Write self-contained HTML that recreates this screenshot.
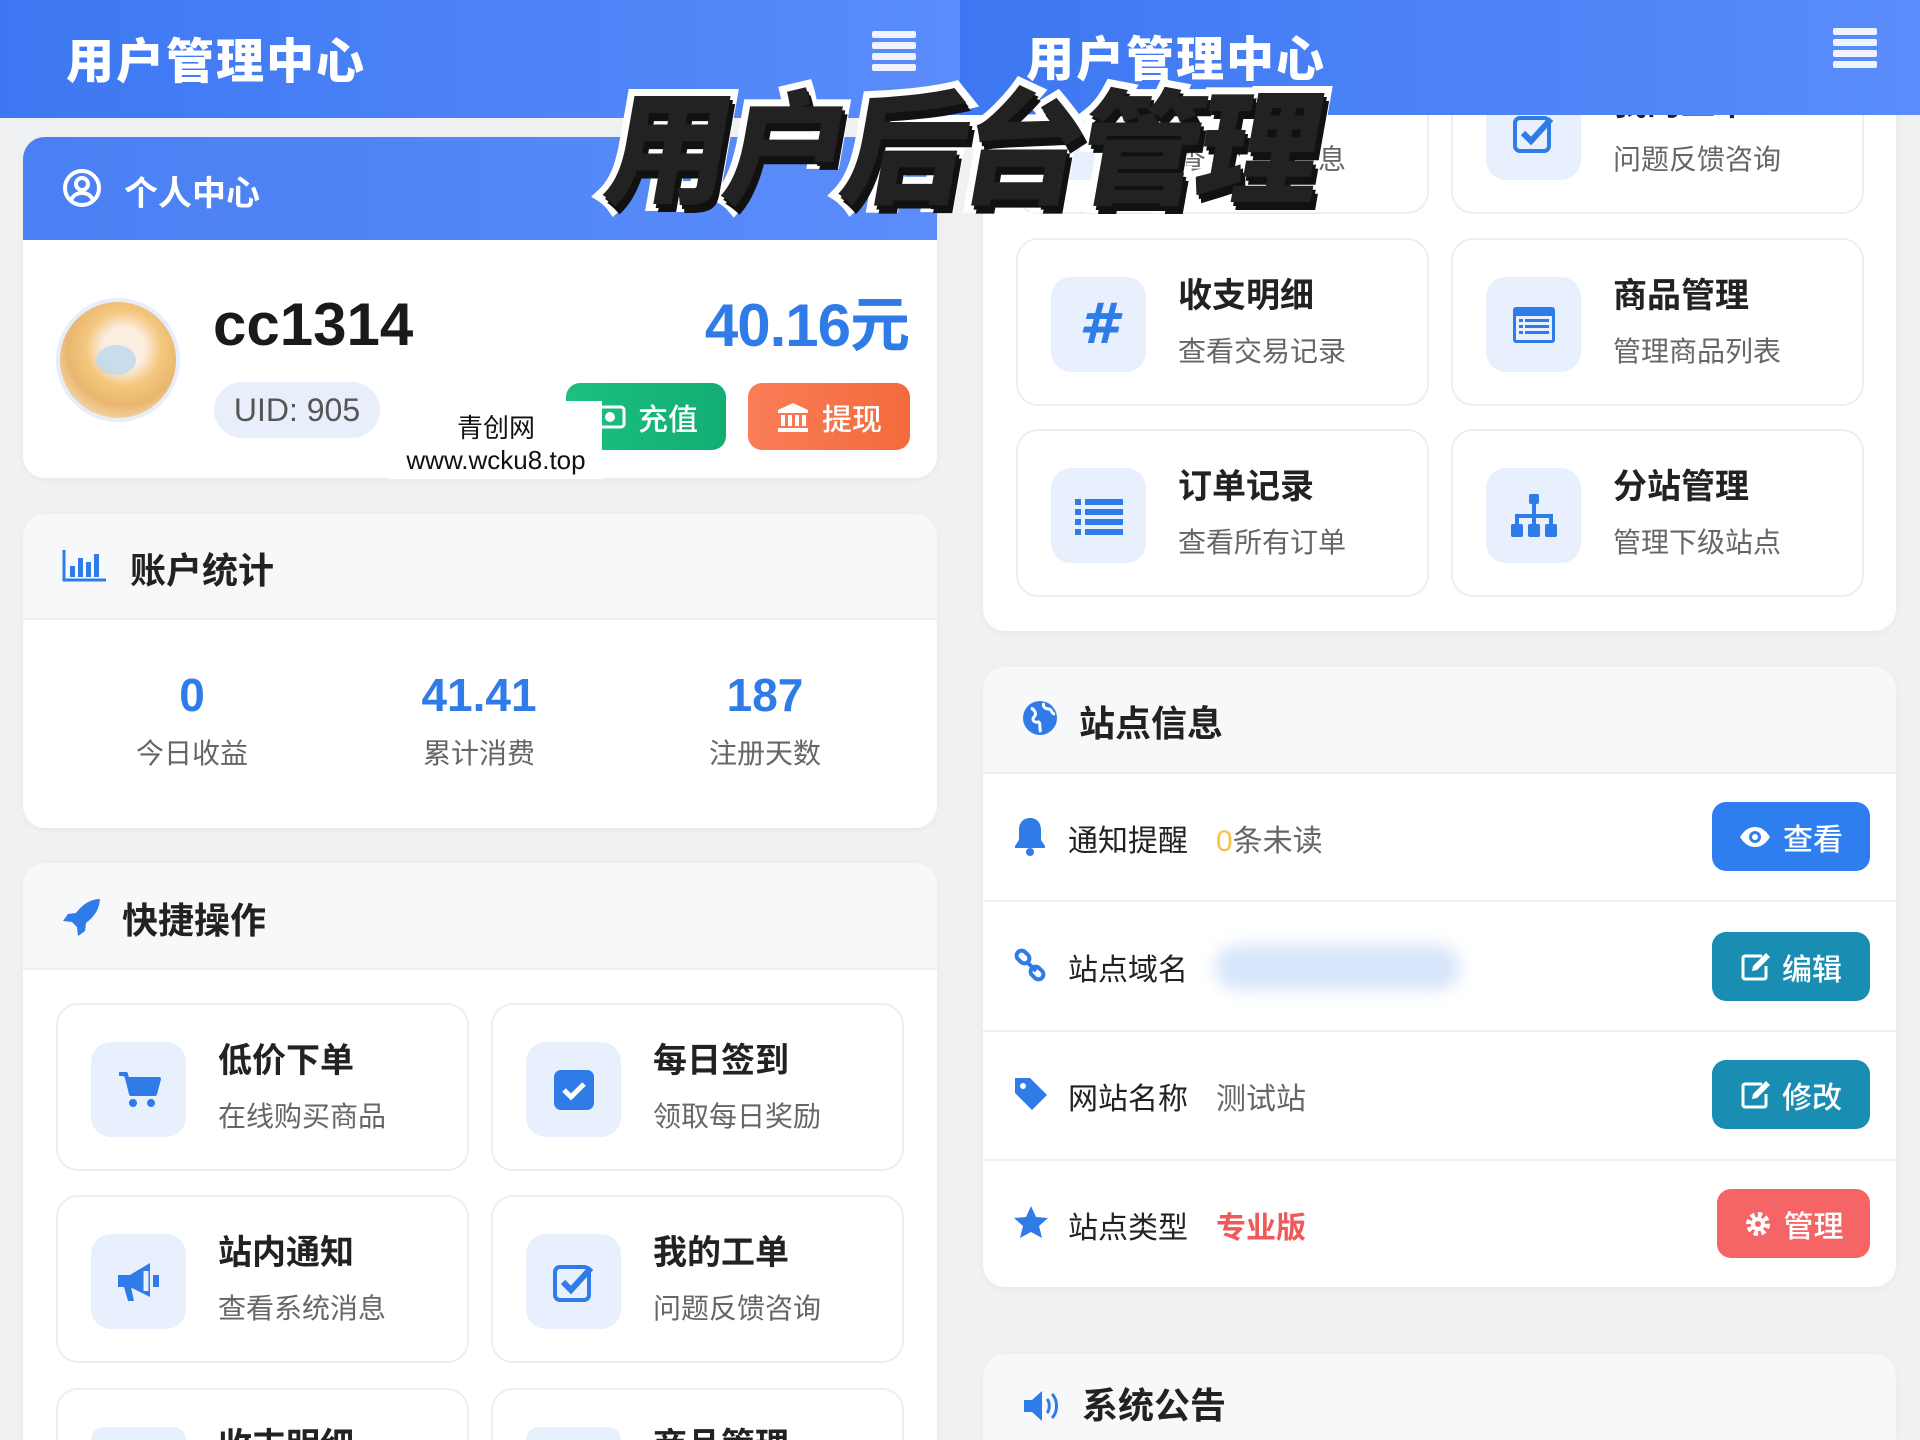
<!DOCTYPE html>
<html><head><meta charset="utf-8"><style>
*{margin:0;padding:0;box-sizing:border-box}
html,body{width:1920px;height:1440px;overflow:hidden}
body{background:#eff1f2;font-family:"Liberation Sans","Noto Sans CJK SC",sans-serif;}
#root{position:relative;width:1920px;height:1440px;overflow:hidden}
.a{position:absolute}
.hdr{background:linear-gradient(90deg,#3d78f2,#5a8cfb);}
.ht{color:#fff;font-size:48px;font-weight:900;letter-spacing:2px}
.hb{width:44px;height:40px;display:flex;flex-direction:column;justify-content:space-between}
.hb i{display:block;height:7px;background:#eef3ff;border-radius:2px}
.card{background:#fff;border-radius:22px;overflow:hidden;box-shadow:0 2px 8px rgba(0,0,0,.04)}
.ch{background:#f7f8f9;border-bottom:2px solid #eef0f2;position:absolute;left:0;right:0;top:0}
.ct{font-size:36px;font-weight:700;color:#222}
.it{position:absolute;width:413px;height:168px;border:2px solid #eceef1;border-radius:22px;background:#fff;overflow:hidden}
.ib{position:absolute;left:33px;top:37px;width:95px;height:95px;background:#e8f0fd;border-radius:20px;display:flex;align-items:center;justify-content:center}
.tt{position:absolute;left:160px;top:36px;font-size:34px;font-weight:700;color:#222;line-height:40px}
.ss{position:absolute;left:160px;top:94px;font-size:28px;color:#666;line-height:36px}
.num{font-size:46px;font-weight:700;color:#2f7be8;text-align:center;width:240px}
.lab{font-size:28px;color:#666;text-align:center;width:240px}
.rl{font-size:30px;color:#222}
.btn{position:absolute;border-radius:14px;color:#fff;font-size:30px;display:flex;align-items:center;justify-content:center;gap:12px;font-weight:500}
</style></head><body><div id="root">

<div class="a hdr" style="left:0;top:0;width:960px;height:118px"></div>
<div class="a ht" style="left:66px;top:22px">用户管理中心</div>
<div class="a hb" style="left:872px;top:31px"><i></i><i></i><i></i><i></i></div>

<div class="a card" style="left:23px;top:137px;width:914px;height:341px">
 <div class="a" style="left:0;top:0;width:914px;height:103px;background:linear-gradient(90deg,#4a80f4,#5b8cfa)"></div>
</div>
<svg class="a" style="left:62px;top:168px" width="40" height="40" viewBox="0 0 40 40"><circle cx="20" cy="20" r="17" fill="none" stroke="#fff" stroke-width="4"/><circle cx="20" cy="16" r="6" fill="none" stroke="#fff" stroke-width="4"/><path d="M9 32c3-6 7-7 11-7s8 1 11 7" fill="none" stroke="#fff" stroke-width="4"/></svg>
<div class="a" style="left:124px;top:166px;color:#fff;font-size:34px;font-weight:700">个人中心</div>
<div class="a" style="left:56px;top:298px;width:124px;height:124px;border-radius:50%;border:4px solid #e6eefb;background:radial-gradient(circle at 55% 40%,#fbeee0 0 22%,#f4c77e 40%,#e9b66e 60%,#f6d9ae 80%);"></div>
<div class="a" style="left:96px;top:345px;width:40px;height:30px;border-radius:50%;background:#bcd8f0;opacity:.8"></div>
<div class="a" style="left:213px;top:290px;font-size:60px;font-weight:700;color:#1a1a1a">cc1314</div>
<div class="a" style="left:214px;top:382px;width:166px;height:56px;border-radius:28px;background:#e8eefa;color:#555;font-size:32px;display:flex;align-items:center;justify-content:center">UID: 905</div>
<div class="a" style="right:1011px;top:277px;font-size:60px;font-weight:700;color:#2f7be8;letter-spacing:-1px">40.16元</div>
<div class="btn" style="left:566px;top:383px;width:160px;height:67px;background:linear-gradient(90deg,#1cc081,#12ad72)">
 <svg width="32" height="26" viewBox="0 0 32 26"><rect x="2" y="3" width="28" height="20" rx="3" fill="none" stroke="#fff" stroke-width="3"/><circle cx="16" cy="13" r="5" fill="#fff"/></svg>充值</div>
<div class="btn" style="left:748px;top:383px;width:162px;height:67px;background:linear-gradient(90deg,#fa7d58,#f36b3c)">
 <svg width="34" height="32" viewBox="0 0 34 32"><path d="M17 2L2 9v3h30V9z" fill="#fff"/><rect x="5" y="14" width="4" height="11" fill="#fff"/><rect x="12" y="14" width="4" height="11" fill="#fff"/><rect x="19" y="14" width="4" height="11" fill="#fff"/><rect x="26" y="14" width="4" height="11" fill="#fff"/><rect x="2" y="27" width="30" height="4" fill="#fff"/></svg>提现</div>
<div class="a" style="left:390px;top:401px;width:212px;height:78px;background:#fff"></div>
<div class="a" style="left:390px;top:408px;width:212px;text-align:center;font-size:26px;color:#111">青创网</div>
<div class="a" style="left:390px;top:445px;width:212px;text-align:center;font-size:26px;color:#111">www.wcku8.top</div>

<div class="a card" style="left:23px;top:514px;width:914px;height:314px">
 <div class="ch" style="height:106px"></div>
</div>
<svg class="a" style="left:62px;top:548px" width="46" height="34" viewBox="0 0 46 34"><path d="M2 2v30h42" fill="none" stroke="#2f7be8" stroke-width="3"/><rect x="8" y="18" width="5" height="11" fill="#2f7be8"/><rect x="16" y="10" width="5" height="19" fill="#2f7be8"/><rect x="24" y="14" width="5" height="15" fill="#2f7be8"/><rect x="32" y="6" width="5" height="23" fill="#2f7be8"/></svg>
<div class="a ct" style="left:130px;top:542px">账户统计</div>
<div class="a num" style="left:72px;top:668px">0</div><div class="a lab" style="left:72px;top:732px">今日收益</div>
<div class="a num" style="left:359px;top:668px">41.41</div><div class="a lab" style="left:359px;top:732px">累计消费</div>
<div class="a num" style="left:645px;top:668px">187</div><div class="a lab" style="left:645px;top:732px">注册天数</div>

<div class="a card" style="left:23px;top:863px;width:914px;height:577px;border-bottom-left-radius:0;border-bottom-right-radius:0">
 <div class="ch" style="height:107px"></div>
</div>
<svg class="a" style="left:62px;top:897px" width="40" height="40" viewBox="0 0 40 40"><path d="M38 2C28 2 20 8 14 16l-8 1-5 7 9 1 5 5 1 9 7-5 1-8c8-6 14-14 14-26z" fill="#2f7be8"/></svg>
<div class="a ct" style="left:122px;top:892px">快捷操作</div>

<div class="it" style="left:56px;top:1003px"><div class="ib"><svg width="44" height="40" viewBox="0 0 44 40"><path d="M2 4h7l5 20h24l4-15H12" fill="#2f7be8" stroke="#2f7be8" stroke-width="4" stroke-linejoin="round"/><circle cx="16" cy="33" r="4" fill="#2f7be8"/><circle cx="34" cy="33" r="4" fill="#2f7be8"/></svg></div><div class="tt">低价下单</div><div class="ss">在线购买商品</div></div>
<div class="it" style="left:491px;top:1003px"><div class="ib"><svg width="42" height="42" viewBox="0 0 42 42"><rect x="1" y="1" width="40" height="40" rx="7" fill="#2f7be8"/><path d="M11 21l7 7 13-13" fill="none" stroke="#fff" stroke-width="5"/></svg></div><div class="tt">每日签到</div><div class="ss">领取每日奖励</div></div>
<div class="it" style="left:56px;top:1195px"><div class="ib"><svg width="46" height="42" viewBox="0 0 46 42"><path d="M2 14h12l20-12v34L14 26H2z" fill="#2f7be8"/><path d="M8 26l4 14h6l-3-14z" fill="#2f7be8"/><rect x="37" y="14" width="6" height="12" fill="#2f7be8"/><path d="M30 10v20" stroke="#e8f0fd" stroke-width="5"/></svg></div><div class="tt">站内通知</div><div class="ss">查看系统消息</div></div>
<div class="it" style="left:491px;top:1195px"><div class="ib"><svg width="44" height="42" viewBox="0 0 44 42"><rect x="3" y="6" width="34" height="33" rx="5" fill="none" stroke="#2f7be8" stroke-width="4"/><path d="M11 21l8 8 20-22" fill="none" stroke="#2f7be8" stroke-width="6"/></svg></div><div class="tt">我的工单</div><div class="ss">问题反馈咨询</div></div>
<div class="it" style="left:56px;top:1388px;height:52px;border-bottom:none;border-bottom-left-radius:0;border-bottom-right-radius:0"><div class="ib" style="height:13px;border-radius:20px 20px 0 0"></div><div class="tt" style="height:14px;overflow:hidden">收支明细</div></div>
<div class="it" style="left:491px;top:1388px;height:52px;border-bottom:none;border-bottom-left-radius:0;border-bottom-right-radius:0"><div class="ib" style="height:13px;border-radius:20px 20px 0 0"></div><div class="tt" style="height:14px;overflow:hidden">商品管理</div></div>

<div class="a card" style="left:983px;top:0;width:913px;height:631px;border-top-left-radius:0;border-top-right-radius:0"></div>
<div class="it" style="left:1016px;top:46px"><div class="ib"></div><div class="tt">站内通知</div><div class="ss">查看系统消息</div></div>
<div class="it" style="left:1451px;top:46px"><div class="ib"><svg width="44" height="42" viewBox="0 0 44 42"><rect x="3" y="6" width="34" height="33" rx="5" fill="none" stroke="#2f7be8" stroke-width="4"/><path d="M11 21l8 8 20-22" fill="none" stroke="#2f7be8" stroke-width="6"/></svg></div><div class="tt">我的工单</div><div class="ss">问题反馈咨询</div></div>
<div class="it" style="left:1016px;top:238px"><div class="ib"><div style="color:#2f7be8;font-size:56px;font-weight:900;font-style:italic;font-family:'DejaVu Sans',sans-serif">#</div></div><div class="tt">收支明细</div><div class="ss">查看交易记录</div></div>
<div class="it" style="left:1451px;top:238px"><div class="ib"><svg width="46" height="40" viewBox="0 0 46 40"><rect x="2" y="2" width="42" height="36" rx="3" fill="#2f7be8"/><rect x="5" y="11" width="36" height="24" fill="#e8f0fd"/><rect x="8" y="14" width="4" height="3" fill="#2f7be8"/><rect x="14" y="14" width="24" height="3" fill="#2f7be8"/><rect x="8" y="20" width="4" height="3" fill="#2f7be8"/><rect x="14" y="20" width="24" height="3" fill="#2f7be8"/><rect x="8" y="26" width="4" height="3" fill="#2f7be8"/><rect x="14" y="26" width="24" height="3" fill="#2f7be8"/></svg></div><div class="tt">商品管理</div><div class="ss">管理商品列表</div></div>
<div class="it" style="left:1016px;top:429px"><div class="ib"><svg width="48" height="38" viewBox="0 0 48 38"><rect x="0" y="2" width="6" height="6" fill="#2f7be8"/><rect x="10" y="2" width="38" height="6" fill="#2f7be8"/><rect x="0" y="12" width="6" height="6" fill="#2f7be8"/><rect x="10" y="12" width="38" height="6" fill="#2f7be8"/><rect x="0" y="22" width="6" height="6" fill="#2f7be8"/><rect x="10" y="22" width="38" height="6" fill="#2f7be8"/><rect x="0" y="32" width="6" height="6" fill="#2f7be8"/><rect x="10" y="32" width="38" height="6" fill="#2f7be8"/></svg></div><div class="tt">订单记录</div><div class="ss">查看所有订单</div></div>
<div class="it" style="left:1451px;top:429px"><div class="ib"><svg width="48" height="46" viewBox="0 0 48 46"><rect x="19" y="1" width="10" height="10" rx="2" fill="#2f7be8"/><path d="M24 11v10M7 31v-8h34v8M24 21v10" fill="none" stroke="#2f7be8" stroke-width="4"/><rect x="1" y="31" width="12" height="13" rx="2" fill="#2f7be8"/><rect x="18" y="31" width="12" height="13" rx="2" fill="#2f7be8"/><rect x="35" y="31" width="12" height="13" rx="2" fill="#2f7be8"/></svg></div><div class="tt">分站管理</div><div class="ss">管理下级站点</div></div>
<div class="a hdr" style="left:960px;top:0;width:960px;height:115px"></div>
<div class="a ht" style="left:1026px;top:20px">用户管理中心</div>
<div class="a hb" style="left:1833px;top:28px"><i></i><i></i><i></i><i></i></div>

<div class="a card" style="left:983px;top:667px;width:913px;height:620px">
 <div class="ch" style="height:107px"></div>
</div>
<svg class="a" style="left:1022px;top:700px" width="36" height="36" viewBox="0 0 36 36"><circle cx="18" cy="18" r="17" fill="#2f7be8"/><path d="M9 8c4 2 6 6 3 9s1 6 4 5 1 8 3 10M22 3c-2 4 2 6 5 6s2 5 6 5" fill="none" stroke="#fff" stroke-width="3"/></svg>
<div class="a ct" style="left:1079px;top:695px">站点信息</div>
<div class="a" style="left:983px;top:900px;width:913px;height:2px;background:#eef0f2"></div>
<div class="a" style="left:983px;top:1030px;width:913px;height:2px;background:#eef0f2"></div>
<div class="a" style="left:983px;top:1159px;width:913px;height:2px;background:#eef0f2"></div>

<svg class="a" style="left:1013px;top:816px" width="34" height="40" viewBox="0 0 34 40"><path d="M17 2c-7 0-11 5-11 12v10l-4 6v2h30v-2l-4-6V14C28 7 24 2 17 2z" fill="#2f7be8"/><circle cx="17" cy="36" r="4" fill="#2f7be8"/></svg>
<div class="a rl" style="left:1068px;top:816px">通知提醒</div>
<div class="a rl" style="left:1216px;top:816px;color:#666"><span style="color:#f5c24a">0</span>条未读</div>
<div class="btn" style="left:1712px;top:802px;width:158px;height:69px;background:#2f7ef0"><svg width="32" height="22" viewBox="0 0 32 22"><path d="M1 11C6 3 11 1 16 1s10 2 15 10c-5 8-10 10-15 10S6 19 1 11z" fill="#fff"/><circle cx="16" cy="11" r="6" fill="#2f7ef0"/><circle cx="16" cy="11" r="3" fill="#fff"/></svg>查看</div>

<svg class="a" style="left:1013px;top:948px" width="36" height="36" viewBox="0 0 36 36"><rect x="3" y="4" width="14" height="10" rx="5" transform="rotate(45 10 9)" fill="none" stroke="#2f7be8" stroke-width="4"/><rect x="17" y="20" width="14" height="10" rx="5" transform="rotate(45 24 25)" fill="none" stroke="#2f7be8" stroke-width="4"/><path d="M13 13l10 10" stroke="#2f7be8" stroke-width="4"/></svg>
<div class="a rl" style="left:1068px;top:945px">站点域名</div>
<div class="a" style="left:1215px;top:945px;width:245px;height:45px;border-radius:24px;background:#d7e5fa;filter:blur(8px)"></div>
<div class="btn" style="left:1712px;top:932px;width:158px;height:69px;background:#1a8db3"><svg width="30" height="30" viewBox="0 0 30 30"><path d="M22 4H5a2 2 0 0 0-2 2v19a2 2 0 0 0 2 2h19a2 2 0 0 0 2-2V14" fill="none" stroke="#fff" stroke-width="3"/><path d="M12 19l1-5L26 1l4 4-13 13z" fill="#fff"/></svg>编辑</div>

<svg class="a" style="left:1013px;top:1076px" width="36" height="36" viewBox="0 0 36 36"><path d="M2 2h15l17 17-15 15L2 17z" fill="#2f7be8"/><circle cx="10" cy="10" r="3" fill="#fff"/></svg>
<div class="a rl" style="left:1068px;top:1074px">网站名称</div>
<div class="a rl" style="left:1216px;top:1074px;color:#666">测试站</div>
<div class="btn" style="left:1712px;top:1060px;width:158px;height:69px;background:#1a8db3"><svg width="30" height="30" viewBox="0 0 30 30"><path d="M22 4H5a2 2 0 0 0-2 2v19a2 2 0 0 0 2 2h19a2 2 0 0 0 2-2V14" fill="none" stroke="#fff" stroke-width="3"/><path d="M12 19l1-5L26 1l4 4-13 13z" fill="#fff"/></svg>修改</div>

<svg class="a" style="left:1012px;top:1205px" width="38" height="36" viewBox="0 0 38 36"><path d="M19 1l5 11 12 1-9 8 3 12-11-6-11 6 3-12-9-8 12-1z" fill="#2f7be8"/></svg>
<div class="a rl" style="left:1068px;top:1203px">站点类型</div>
<div class="a rl" style="left:1216px;top:1203px;color:#ee5a5a;font-weight:700">专业版</div>
<div class="btn" style="left:1717px;top:1189px;width:153px;height:69px;background:#f56565"><svg width="28" height="28" viewBox="0 0 28 28"><circle cx="14" cy="14" r="9" fill="none" stroke="#fff" stroke-width="6" stroke-dasharray="4 3"/><circle cx="14" cy="14" r="7" fill="#fff"/><circle cx="14" cy="14" r="3" fill="#f56565"/></svg>管理</div>

<div class="a card" style="left:983px;top:1354px;width:913px;height:86px;background:#f7f8f9;border-bottom-left-radius:0;border-bottom-right-radius:0"></div>
<svg class="a" style="left:1022px;top:1388px" width="40" height="36" viewBox="0 0 40 36"><path d="M2 12h8l10-9v30l-10-9H2z" fill="#2f7be8"/><path d="M25 11c3 3 3 11 0 14M30 6c6 6 6 18 0 24" fill="none" stroke="#2f7be8" stroke-width="3"/></svg>
<div class="a ct" style="left:1082px;top:1384px;line-height:44px">系统公告</div>

<div class="a" style="left:610px;top:66px;font-family:'Noto Sans CJK SC',sans-serif;font-size:124px;font-weight:900;letter-spacing:-6px;color:#222;transform:skewX(-10deg);-webkit-text-stroke:14px #fff;paint-order:stroke fill;text-shadow:6px 8px 0 #111,3px 4px 0 #111;white-space:nowrap;line-height:1.2">用户后台管理</div>

</div></body></html>
